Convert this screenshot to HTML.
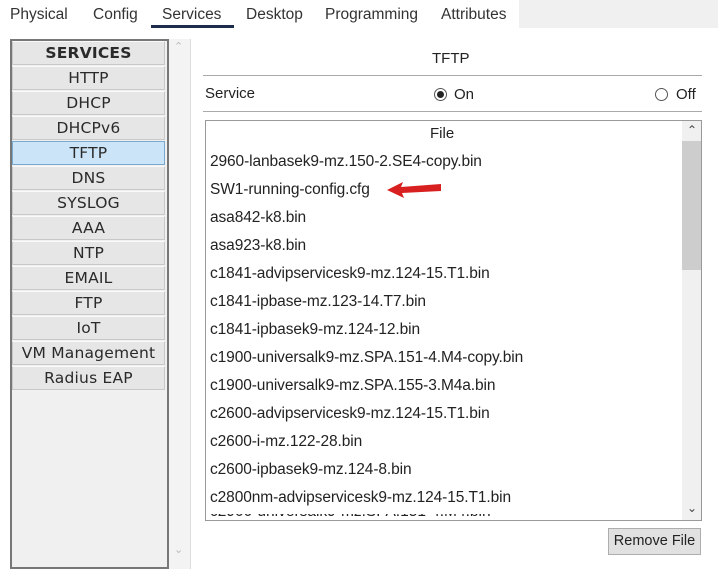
<!DOCTYPE html>
<html><head><meta charset="utf-8"><style>
*{margin:0;padding:0;box-sizing:border-box}
body{width:720px;height:561px;background:#fff;position:relative;overflow:hidden;font-family:"Liberation Sans",Arial,sans-serif;color:#222}
.a{position:absolute}
.tab{position:absolute;top:6px;font-size:15.5px;color:#333}
.left{left:10px;top:39px;width:159px;height:530px;border:2px solid #777;background:#f0f0f0}
.item{position:absolute;left:1px;width:153px;height:24px;background:#e6e6e6;border:1px solid #c8c8c8;border-top:1px solid #fafafa;font-family:"DejaVu Sans",sans-serif;font-size:15.5px;text-align:center;line-height:22px;color:#2a2a2a;white-space:nowrap;letter-spacing:0.2px}
.row{position:absolute;left:210px;font-size:15.5px;color:#222;letter-spacing:-0.1px}
</style></head><body>
<div class="tab" style="left:10px">Physical</div>
<div class="tab" style="left:93px">Config</div>
<div class="tab" style="left:162px">Services</div>
<div class="a" style="left:151px;top:25px;width:83px;height:3px;background:#1b2d4a"></div>
<div class="tab" style="left:246px">Desktop</div>
<div class="tab" style="left:325px">Programming</div>
<div class="tab" style="left:441px">Attributes</div>
<div class="a" style="left:519px;top:0;width:199px;height:28px;background:#f0f0f0"></div>

<div class="a left"></div>
<div class="item" style="top:41px;left:12px;font-weight:bold;font-size:15.5px">SERVICES</div>
<div class="item" style="top:66px;left:12px">HTTP</div>
<div class="item" style="top:91px;left:12px">DHCP</div>
<div class="item" style="top:116px;left:12px">DHCPv6</div>
<div class="item" style="top:141px;left:12px;background:#cce4f7;border:1px solid #7aa9d0">TFTP</div>
<div class="item" style="top:166px;left:12px">DNS</div>
<div class="item" style="top:191px;left:12px">SYSLOG</div>
<div class="item" style="top:216px;left:12px">AAA</div>
<div class="item" style="top:241px;left:12px">NTP</div>
<div class="item" style="top:266px;left:12px">EMAIL</div>
<div class="item" style="top:291px;left:12px">FTP</div>
<div class="item" style="top:316px;left:12px">IoT</div>
<div class="item" style="top:341px;left:12px">VM Management</div>
<div class="item" style="top:366px;left:12px">Radius EAP</div>
<div class="a" style="left:169px;top:39px;width:22px;height:530px;background:#f3f3f3;border-right:1px solid #ddd"></div>
<div class="a" style="left:174px;top:40px;font-size:11px;color:#bbb">&#8963;</div>
<div class="a" style="left:174px;top:543px;font-size:11px;color:#bbb">&#8964;</div>

<div class="a" style="left:432px;top:50px;font-size:15px">TFTP</div>
<div class="a" style="left:203px;top:75px;width:499px;height:1px;background:#aaa"></div>
<div class="a" style="left:205px;top:85px;font-size:15px">Service</div>
<div class="a" style="left:434px;top:88px;width:13px;height:13px;border:1px solid #555;border-radius:50%"><div class="a" style="left:2px;top:2px;width:7px;height:7px;border-radius:50%;background:#222"></div></div>
<div class="a" style="left:454px;top:86px;font-size:15px">On</div>
<div class="a" style="left:655px;top:88px;width:13px;height:13px;border:1px solid #555;border-radius:50%"></div>
<div class="a" style="left:676px;top:86px;font-size:15px">Off</div>
<div class="a" style="left:203px;top:111px;width:499px;height:1px;background:#aaa"></div>

<div class="a" style="left:205px;top:120px;width:497px;height:401px;border:1px solid #999;overflow:hidden">
<div class="a" style="left:476px;top:0;width:19px;height:399px;background:#f0f0f0"></div>
<div class="a" style="left:476px;top:20px;width:19px;height:129px;background:#cdcdcd"></div>
<div class="a" style="left:481px;top:2px;font-size:12px;color:#444">&#8963;</div>
<div class="a" style="left:481px;top:380px;font-size:12px;color:#444">&#8964;</div>
</div>
<div class="a" style="left:430px;top:125px;font-size:15px">File</div>
<div class="row" style="top:153px">2960-lanbasek9-mz.150-2.SE4-copy.bin</div>
<div class="row" style="top:181px">SW1-running-config.cfg</div>
<svg class="a" style="left:383px;top:178px" width="62" height="22"><path d="M4 12 L20 4 L18 9 L58 6 L58 13 L19 15 L21 20 Z" fill="#d92020"/></svg>
<div class="row" style="top:209px">asa842-k8.bin</div>
<div class="row" style="top:237px">asa923-k8.bin</div>
<div class="row" style="top:265px">c1841-advipservicesk9-mz.124-15.T1.bin</div>
<div class="row" style="top:293px">c1841-ipbase-mz.123-14.T7.bin</div>
<div class="row" style="top:321px">c1841-ipbasek9-mz.124-12.bin</div>
<div class="row" style="top:349px">c1900-universalk9-mz.SPA.151-4.M4-copy.bin</div>
<div class="row" style="top:377px">c1900-universalk9-mz.SPA.155-3.M4a.bin</div>
<div class="row" style="top:405px">c2600-advipservicesk9-mz.124-15.T1.bin</div>
<div class="row" style="top:433px">c2600-i-mz.122-28.bin</div>
<div class="row" style="top:461px">c2600-ipbasek9-mz.124-8.bin</div>
<div class="row" style="top:489px">c2800nm-advipservicesk9-mz.124-15.T1.bin</div>
<div class="a" style="left:210px;top:514px;width:310px;height:6px;overflow:hidden"><div style="font-size:15.5px;margin-top:-11px">c2900-universalk9-mz.SPA.151-4.M4.bin</div></div>

<div class="a" style="left:608px;top:528px;width:93px;height:27px;background:#e1e1e1;border:1px solid #adadad;font-size:14.5px;text-align:center;line-height:25px">Remove File</div>
</body></html>
